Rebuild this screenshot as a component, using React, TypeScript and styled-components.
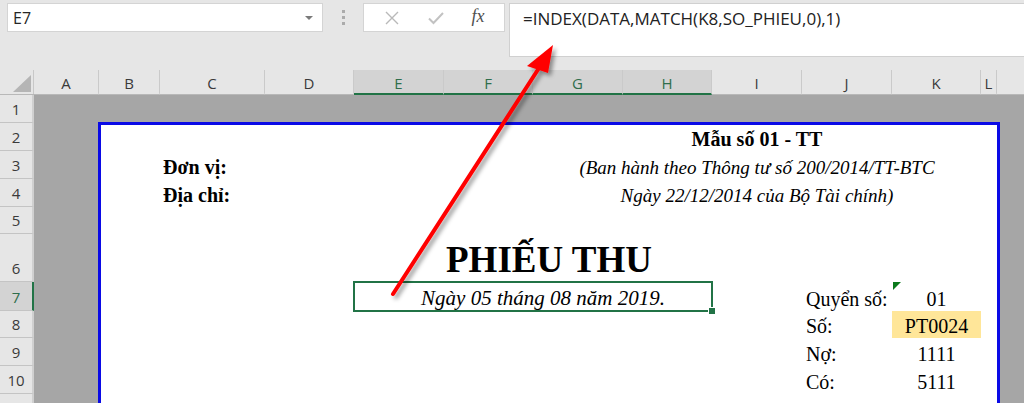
import React from "react";
import styled, { createGlobalStyle } from "styled-components";

const GlobalStyle = createGlobalStyle`
  html, body {
    margin: 0;
    padding: 0;
  }
  body {
    background: #e6e6e6;
    font-family: "Open Sans", "Liberation Sans", sans-serif;
  }
`;

const GREEN = "#217346";
const SERIF = `"Liberation Serif", "Times New Roman", serif`;

const COLUMNS = [
    { id: "A", w: 65 },
    { id: "B", w: 61 },
    { id: "C", w: 105 },
    { id: "D", w: 89 },
    { id: "E", w: 90, sel: true },
    { id: "F", w: 89, sel: true },
    { id: "G", w: 90, sel: true },
    { id: "H", w: 89, sel: true },
    { id: "I", w: 90 },
    { id: "J", w: 90 },
    { id: "K", w: 89 },
    { id: "L", w: 16 },
];

const ROWS = [
    { n: 1, h: 28 },
    { n: 2, h: 28 },
    { n: 3, h: 28 },
    { n: 4, h: 28 },
    { n: 5, h: 27 },
    { n: 6, h: 48 },
    { n: 7, h: 29, sel: true },
    { n: 8, h: 27 },
    { n: 9, h: 28 },
    { n: 10, h: 28 },
];

const Window = styled.div`
  position: relative;
  width: 1024px;
  height: 403px;
  overflow: hidden;
  background: #e6e6e6;
`;

/* ---------- formula bar ---------- */

const TopBar = styled.div`
  display: flex;
  align-items: flex-start;
  height: 70px;
  padding: 3px 0 0 7px;
  box-sizing: border-box;
`;

const NameBox = styled.div`
  position: relative;
  width: 316px;
  height: 29px;
  box-sizing: border-box;
  background: #fff;
  border: 1px solid #d4d4d4;
  display: flex;
  align-items: center;
  padding-left: 5px;
  font-size: 16px;
  color: #262626;
`;

const DropArrow = styled.span`
  position: absolute;
  right: 9px;
  top: 12px;
  width: 0;
  height: 0;
  border-left: 4px solid transparent;
  border-right: 4px solid transparent;
  border-top: 4px solid #7a7a7a;
`;

const Grip = styled.div`
  width: 40px;
  height: 29px;
  display: flex;
  flex-direction: column;
  align-items: center;
  justify-content: center;
  gap: 3px;
`;

const GripDot = styled.span`
  width: 3px;
  height: 3px;
  background: #ababab;
`;

const ButtonBox = styled.div`
  width: 142px;
  height: 29px;
  box-sizing: border-box;
  background: #fff;
  border: 1px solid #d4d4d4;
  display: flex;
  align-items: center;
  justify-content: space-around;
  padding: 0 6px;
`;

const FxLabel = styled.span`
  font-family: ${SERIF};
  font-style: italic;
  font-size: 18px;
  color: #505050;
  margin-top: -2px;
`;

const FormulaBox = styled.div`
  flex: 1;
  height: 54px;
  margin-left: 4px;
  box-sizing: border-box;
  background: #fff;
  border: 1px solid #d0d0d0;
  border-right: none;
  padding: 3px 0 0 13px;
  font-size: 17px;
  color: #222;
`;

/* ---------- headers ---------- */

const HeaderRow = styled.div`
  display: flex;
  height: 25px;
  border-bottom: 1px solid #b8b8b8;
  box-sizing: border-box;
`;

const Corner = styled.div`
  position: relative;
  width: 34px;
  flex: none;
  border-right: 1px solid #c8c8c8;
  box-sizing: border-box;
`;

const CornerTriangle = styled.span`
  position: absolute;
  right: 2px;
  bottom: 2px;
  width: 0;
  height: 0;
  border-left: 18px solid transparent;
  border-bottom: 17px solid #b5b5b5;
`;

const ColHeader = styled.div<{ $w: number; $sel?: boolean }>`
  width: ${(p) => p.$w}px;
  flex: none;
  box-sizing: border-box;
  display: flex;
  align-items: center;
  justify-content: center;
  font-size: 15px;
  color: ${(p) => (p.$sel ? "#2f6e4c" : "#3a3a3a")};
  background: ${(p) => (p.$sel ? "#d3d3d3" : "transparent")};
  border-right: 1px solid #cacaca;
  border-bottom: 2px solid ${(p) => (p.$sel ? GREEN : "transparent")};
  margin-bottom: -1px;
  padding-top: 3px;
`;

const Body = styled.div`
  display: flex;
  height: 308px;
`;

const RowHeaders = styled.div`
  width: 34px;
  flex: none;
  display: flex;
  flex-direction: column;
  background: #e6e6e6;
  border-right: 2px solid #d0d0d0;
  box-sizing: border-box;
`;

const RowHeader = styled.div<{ $h: number; $sel?: boolean }>`
  height: ${(p) => p.$h}px;
  flex: none;
  box-sizing: border-box;
  display: flex;
  align-items: flex-end;
  justify-content: center;
  padding-bottom: 3px;
  font-size: 15px;
  color: ${(p) => (p.$sel ? "#2f6e4c" : "#3a3a3a")};
  background: ${(p) => (p.$sel ? "#d3d3d3" : "#e6e6e6")};
  border-bottom: 1px solid #c4c4c4;
  margin-right: -2px;
  border-right: 2px solid ${(p) => (p.$sel ? GREEN : "#d0d0d0")};
`;

/* ---------- sheet ---------- */

const Sheet = styled.div`
  flex: 1;
  background: #a6a6a6;
  padding: 27px 0 0 64px;
  overflow: hidden;
`;

const Page = styled.div`
  width: 902px;
  height: 330px;
  box-sizing: border-box;
  background: #fff;
  border: 3px solid #0a0ae6;
  border-bottom: none;
  display: grid;
  grid-template-columns: 59px 105px 89px 90px 89px 90px 89px 90px 90px 89px 16px;
  grid-template-rows: 26px 28px 28px 27px 48px 29px 27px 28px 28px 28px;
  font-family: ${SERIF};
  color: #000;
`;

const Cell = styled.div<{
    $col: string;
    $row: number;
    $center?: boolean;
    $bold?: boolean;
    $italic?: boolean;
    $size?: number;
    $bg?: string;
    $pad?: number;
}>`
  position: relative;
  grid-column: ${(p) => p.$col};
  grid-row: ${(p) => p.$row};
  display: flex;
  align-items: flex-end;
  justify-content: ${(p) => (p.$center ? "center" : "flex-start")};
  padding-left: ${(p) => p.$pad ?? 0}px;
  font-size: ${(p) => p.$size ?? 20}px;
  font-weight: ${(p) => (p.$bold ? 700 : 400)};
  font-style: ${(p) => (p.$italic ? "italic" : "normal")};
  background: ${(p) => p.$bg ?? "transparent"};
  white-space: nowrap;
  line-height: 1.15;
`;

const SelectedCell = styled(Cell)`
  outline: 2px solid ${GREEN};
  outline-offset: -1px;
  padding-bottom: 1px;
`;

const FillHandle = styled.span`
  position: absolute;
  right: -4px;
  bottom: -4px;
  width: 6px;
  height: 6px;
  background: ${GREEN};
  border: 1px solid #fff;
`;

const ErrorMark = styled.span`
  position: absolute;
  left: 1px;
  top: 0;
  width: 0;
  height: 0;
  border-top: 8px solid #0b7a1c;
  border-right: 8px solid transparent;
`;

const Overlay = styled.svg`
  position: absolute;
  left: 0;
  top: 0;
  pointer-events: none;
`;

const CloseIcon = () => (
    <svg width="16" height="16" viewBox="0 0 16 16">
        <path d="M2 2 L14 14 M14 2 L2 14" stroke="#b9b9b9" strokeWidth="1.4" fill="none" />
    </svg>
);

const CheckIcon = () => (
    <svg width="18" height="16" viewBox="0 0 18 16">
        <path d="M2 8.5 L6.5 13 L16 3" stroke="#c2c2c2" strokeWidth="2" fill="none" />
    </svg>
);

const Arrow = () => (
    <Overlay width={1024} height={403} viewBox="0 0 1024 403">
        <defs>
            <filter id="shadow" x="-20%" y="-20%" width="140%" height="140%">
                <feDropShadow dx="3" dy="3" stdDeviation="2" floodColor="#000" floodOpacity="0.4" />
            </filter>
        </defs>
        <g filter="url(#shadow)">
            <line x1="393" y1="294" x2="539" y2="68" stroke="#ff0000" strokeWidth="4" strokeLinecap="round" />
            <polygon points="553,45 527,66 548,73" fill="#ff0000" />
        </g>
    </Overlay>
);

export default function App() {
    return (
        <Window>
            <GlobalStyle />
            <TopBar>
                <NameBox>
                    E7
                    <DropArrow />
                </NameBox>
                <Grip>
                    <GripDot />
                    <GripDot />
                    <GripDot />
                </Grip>
                <ButtonBox>
                    <CloseIcon />
                    <CheckIcon />
                    <FxLabel>fx</FxLabel>
                </ButtonBox>
                <FormulaBox>=INDEX(DATA,MATCH(K8,SO_PHIEU,0),1)</FormulaBox>
            </TopBar>

            <HeaderRow>
                <Corner>
                    <CornerTriangle />
                </Corner>
                {COLUMNS.map((c) => (
                    <ColHeader key={c.id} $w={c.w} $sel={c.sel}>
                        {c.id}
                    </ColHeader>
                ))}
            </HeaderRow>

            <Body>
                <RowHeaders>
                    {ROWS.map((r) => (
                        <RowHeader key={r.n} $h={r.h} $sel={r.sel}>
                            {r.n}
                        </RowHeader>
                    ))}
                </RowHeaders>
                <Sheet>
                    <Page>
                        <Cell $col="6 / 11" $row={1} $center $bold>Mẫu số 01 - TT</Cell>
                        <Cell $col="2 / 4" $row={2} $bold $pad={3}>Đơn vị:</Cell>
                        <Cell $col="6 / 11" $row={2} $center $italic $size={19}>(Ban hành theo Thông tư số 200/2014/TT-BTC</Cell>
                        <Cell $col="2 / 4" $row={3} $bold $pad={3}>Địa chỉ:</Cell>
                        <Cell $col="6 / 11" $row={3} $center $italic $size={19}>Ngày 22/12/2014 của Bộ Tài chính)</Cell>

                        <Cell $col="1 / 12" $row={5} $center $bold $size={37}>PHIẾU THU</Cell>

                        <SelectedCell $col="4 / 8" $row={6} $center $italic $size={21} $pad={20}>
                            Ngày 05 tháng 08 năm 2019.
                            <FillHandle />
                        </SelectedCell>
                        <Cell $col="9" $row={6} $pad={4}>Quyển số:</Cell>
                        <Cell $col="10" $row={6} $center>
                            <ErrorMark />
                            01
                        </Cell>

                        <Cell $col="9" $row={7} $pad={4}>Số:</Cell>
                        <Cell $col="10" $row={7} $center $bg="#ffe699">PT0024</Cell>

                        <Cell $col="9" $row={8} $pad={4}>Nợ:</Cell>
                        <Cell $col="10" $row={8} $center>1111</Cell>

                        <Cell $col="9" $row={9} $pad={4}>Có:</Cell>
                        <Cell $col="10" $row={9} $center>5111</Cell>
                    </Page>
                </Sheet>
            </Body>
            <Arrow />
        </Window>
    );
}
